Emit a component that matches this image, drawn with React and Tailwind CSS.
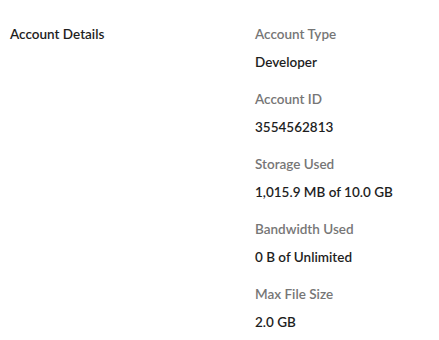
export default function App() {
  const items = [
    ["Account Type", "Developer"],
    ["Account ID", "3554562813"],
    ["Storage Used", "1,015.9 MB of 10.0 GB"],
    ["Bandwidth Used", "0 B of Unlimited"],
    ["Max File Size", "2.0 GB"],
  ];
  return (
    <div className="w-[439px] h-[340px] bg-white flex pt-[24px] font-['Lato','Liberation_Sans',sans-serif] text-[13.5px] leading-[20px] font-semibold">
      <div className="w-[255px] pl-[10px] text-[#1e1e1e]">Account Details</div>
      <div className="flex flex-col">
        {items.map(([l, v], i) => (
          <div key={l} className={i > 0 ? "mt-[17px]" : ""}>
            <div className="text-[#767676]">{l}</div>
            <div className="mt-[8px] text-[#1e1e1e]">{v}</div>
          </div>
        ))}
      </div>
    </div>
  );
}
